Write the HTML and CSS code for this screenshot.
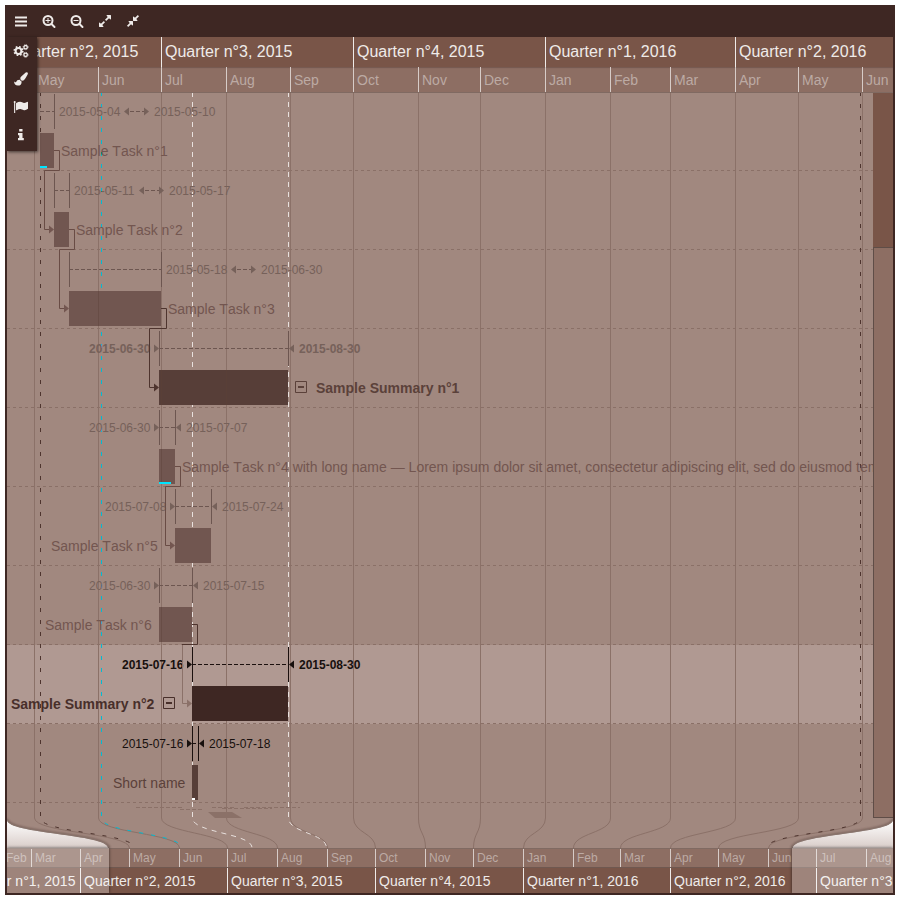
FILE: styles.css
```css
* { box-sizing: border-box; }
body {
  margin: 0;
  padding: 5px;
  background: #fff;
  font-family: "Liberation Sans", Arial, sans-serif;
}
.app {
  position: relative;
  display: flex;
  flex-direction: column;
  width: 890px;
  height: 890px;
  overflow: hidden;
  border: 2px solid #3e2723;
  background: #a1887f;
}
.toolbar { display: flex; flex: 0 0 30px; background: #3e2723; }
.tool {
  display: flex;
  align-items: center;
  justify-content: center;
  width: 28px;
  height: 28px;
}
.tool svg { width: 14px; height: 14px; overflow: visible; fill: #efebe9; }
.side-menu {
  position: absolute;
  top: 30px;
  left: 0;
  z-index: 2;
  width: 30px;
  height: 114px;
  background: #3e2723;
  box-shadow: 1px 1px 3px rgba(0, 0, 0, .6);
}

.scale { display: flex; overflow: hidden; white-space: nowrap; }
.scale span { flex: none; overflow: hidden; padding-left: 3px; border-left: 1px solid; }
.scale span:first-child { padding: 0; border: 0; }
.quarters { background: #795548; color: #efebe9; }
.months { background: #8d6e63; color: #bcaaa4; }
.months span { border-color: #d7ccc8; }
.main-quarters { flex: 0 0 30px; font-size: 16px; line-height: 29px; }
.main-quarters span:first-child { text-indent: 4px; }
.main-months {
  flex: 0 0 26px;
  border-bottom: 1px solid #806a62;
  font-size: 14px;
  line-height: 27px;
  box-shadow: inset 0 1px 1px rgba(62, 39, 35, .3);
}
.mini-months {
  flex: 0 0 20px;
  border-top: 1px solid #806a62;
  border-bottom: 1px solid #6f5850;
  font-size: 12px;
  line-height: 18px;
}
.mini-months span:first-child { text-indent: -1px; }
.mini-quarters { flex: 1; font-size: 14px; line-height: 27px; }
.mini-quarters span:first-child { text-indent: -43px; }
.overview { position: relative; display: flex; flex-direction: column; height: 45px; }
.veil { position: absolute; inset: 0; display: flex; justify-content: space-between; }
.veil div { width: 102px; background: rgba(255, 255, 255, .28); box-shadow: 0 0 3px rgba(0, 0, 0, .6); }
.veil div:last-child { width: 101px; }

.chart { display: block; flex: 0 0 755px; width: 886px; }
.chart path { fill: none; }
.hover-row { fill: #b09992; }
.grid { stroke: #8b7168; }
.bar-grid { stroke: #5d4037; opacity: .4; }
.rows { stroke: #8a7067; stroke-dasharray: 3 3; }
.task { fill: #715650; }
.dim { fill: #573e38; }
.full { fill: #3e2723; }
.progress { fill: #00e5ff; }
.started { fill: #fff; }
.marker { stroke: #4e342e; stroke-dasharray: 4 8; }
.marker.cyan { stroke: #00bcd4; }
.marker.light { stroke: #e8e0dd; stroke-dasharray: 5 5; }
.span { fill: #76615a; stroke: #6d5650; font-size: 12px; }
.span.now { fill: #17100e; stroke: #1b100e; }
.span text { stroke: none; }
.dash { stroke-dasharray: 4 2; }
.link { fill: #735650; stroke: #694c45; }
.link.dark { fill: #4e342e; stroke: #4e342e; }
.link.pale { fill: #8b7169; stroke: #8b7169; }
.chart .head { fill: inherit; stroke: none; }
.name { font-size: 14px; font-kerning: none; fill: #735650; }
.name.dim { fill: #5b413a; }
.name.full { fill: #482f2a; }
.bold { font-weight: bold; }
.toggle { stroke: #482f2a; fill: none; }
.toggle.dim { stroke: #5b413a; }
.minus { stroke-width: 2; }
.folded { stroke: #8b7168; }
.chart .fold-bar { fill: #8b7168; stroke: none; }
.thumb { fill: #795548; }
.track { fill: #8d6e63; stroke: #5f4d47; }
.chart .paper { fill: url(#paper); }
.shade { stroke: #3e2723; stroke-width: 2; opacity: .45; filter: url(#soft); }
.edge { stroke: #8a7972; opacity: .7; }
```

FILE: index.html
```html
<!DOCTYPE html>
<html lang="en">
<head>
<meta charset="utf-8">
<title>Gantt chart</title>
<link rel="stylesheet" href="styles.css">
</head>
<body>
<div class="app">
  <nav class="toolbar">
    <div class="tool"><svg viewBox="0 0 14 14"><path d="M1 2.500h12v2H1zM1 6.500h12v2H1zM1 10.500h12v2H1z"/></svg></div>
    <div class="tool"><svg viewBox="0 0 14 14"><g fill="none" stroke="#efebe9" stroke-width="2"><circle cx="6" cy="6.500" r="4.500"/><path d="M9.500 10l3 3" stroke-linecap="round"/><path d="M3.500 6.500h5M6 4v5" stroke-width="1"/></g></svg></div>
    <div class="tool"><svg viewBox="0 0 14 14"><g fill="none" stroke="#efebe9" stroke-width="2"><circle cx="6" cy="6.500" r="4.500"/><path d="M9.500 10l3 3" stroke-linecap="round"/><path d="M3.500 6.500h5" stroke-width="1"/></g></svg></div>
    <div class="tool"><svg viewBox="0 0 1792 1792"><path d="M883 1056q0 13-10 23l-332 332 144 144q19 19 19 45t-19 45-45 19H192q-26 0-45-19t-19-45v-448q0-26 19-45t45-19 45 19l144 144 332-332q10-10 23-10t23 10l114 114q10 10 10 23zm781-864v448q0 26-19 45t-45 19-45-19l-144-144-332 332q-10 10-23 10t-23-10L919 759q-10-10-10-23t10-23l332-332-144-144q-19-19-19-45t19-45 45-19h448q26 0 45 19t19 45z"/></svg></div>
    <div class="tool"><svg viewBox="0 0 1792 1792"><path d="M896 960v448q0 26-19 45t-45 19-45-19l-144-144-332 332q-10 10-23 10t-23-10l-114-114q-10-10-10-23t10-23l332-332-144-144q-19-19-19-45t19-45 45-19h448q26 0 45 19t19 45zm755-672q0 13-10 23l-332 332 144 144q19 19 19 45t-19 45-45 19H960q-26 0-45-19t-19-45V384q0-26 19-45t45-19 45 19l144 144 332-332q10-10 23-10t23 10l114 114q10 10 10 23z"/></svg></div>
  </nav>
  <aside class="side-menu">
    <div class="tool"><svg viewBox="0 0 14 14"><g fill="none" stroke="#efebe9"><circle cx="4.500" cy="7" r="2.900" stroke-width="2"/><circle cx="4.500" cy="7" r="4.300" stroke-width="1.600" stroke-dasharray="1.690"/><circle cx="11.600" cy="3.200" r="1.700" stroke-width="1.300"/><circle cx="11.600" cy="3.200" r="2.500" stroke-width=".8" stroke-dasharray="1"/><circle cx="11.600" cy="10.800" r="1.700" stroke-width="1.300"/><circle cx="11.600" cy="10.800" r="2.500" stroke-width=".8" stroke-dasharray="1"/></g></svg></div>
    <div class="tool"><svg viewBox="0 0 14 14"><path d="M12.700.2q1.200.1 1.200 1.300 0 .45-.3 1.050-2.500 4.600-3.500 5.500-.7.650-1.600.65-2.200-.1-2.200-2.300 0-.95.700-1.600L11.700.6q.45-.4 1-.4zM5.700 7.800q.6 1.300 1.900 1.600v.5q0 3.500-3.700 3.700Q.2 13.500.1 9.450q1 .8 1.450.8.4 0 .55-.35.700-2.200 3.600-2.100z"/></svg></div>
    <div class="tool"><svg viewBox="0 0 14 14"><path d="M1.700 1.900q0 .7-.5 1v10H.1v-10q-.5-.4-.4-1 0-1 1-1t1 1zM14 2.500v6.300q-1.900 1.400-3.300 1.400-.75 0-1.350-.25L8 9.400Q7.100 9 6.200 9q-1.500 0-3.500 1.150-.7.300-.7-.35V3.500q0-.3.300-.5 2-1.200 3.700-1.200 1.200 0 2.700.8.600.35 1.300.35 1.100 0 3-1 1-.4 1 .55z"/></svg></div>
    <div class="tool"><svg viewBox="0 0 14 14"><path d="M5.200 1h3.300v2.500H5.200zM4 5h4.500v5h1.300v2.200H4V10h1.200V7.200H4z"/></svg></div>
  </aside>
  <div class="scale quarters main-quarters"></div>
  <div class="scale months main-months"></div>
  <svg class="chart" viewBox="7 93 886 755"></svg>
  <footer class="overview">
    <div class="scale months mini-months"></div>
    <div class="scale quarters mini-quarters"></div>
    <div class="veil"><div></div><div></div></div>
  </footer>
</div>
<script src="chart.js"></script>
</body>
</html>
```

FILE: chart.js
```js
const MONTHS = 'Jan Feb Mar Apr May Jun Jul Aug Sep Oct Nov Dec'.split(' ');
const main = [34, 98, 161, 226, 290, 353, 418, 480, 545, 610, 670, 735, 798, 862];
const mini = [31, 80, 129, 179, 227, 277, 327, 375, 425, 473, 523, 573, 620, 670, 718, 768, 816, 866];

function scale(selector, edges, labels) {
  const all = [7, ...edges, 893];
  document.querySelector(selector).innerHTML = labels
    .map((l, i) => `<span style="width:${all[i + 1] - all[i]}px">${l}</span>`).join('');
}
const quarters = (from, n) => Array.from({ length: n }, (_, i) =>
  `Quarter n°${(from + i) % 4 + 1}, ${2015 + Math.floor((from + i) / 4)}`);
scale('.main-quarters', [161, 353, 545, 735], quarters(1, 5));
scale('.main-months', main, ['', ...main.map((_, i) => MONTHS[(i + 4) % 12])]);
scale('.mini-months', mini, ['Feb', ...mini.map((_, i) => MONTHS[(i + 2) % 12])]);
scale('.mini-quarters', [80, 227, 375, 523, 670, 816], quarters(0, 7));

const path = (d, c = '') => `<path class="${c}" d="${d}"/>`;
const box = (x, y, w, h, c) => `<rect class="${c}" x="${x}" y="${y}" width="${w}" height="${h}"/>`;
const text = (x, y, t, c = '') => `<text class="${c}" x="${x}" y="${y}">${t}</text>`;
const group = (c, s) => `<g class="${c}">${s}</g>`;
const right = (x, y) => path(`M${x - 5} ${y - 4}l5 4-5 4z`, 'head');
const left = (x, y) => path(`M${x + 5} ${y - 4}l-5 4 5 4z`, 'head');
// Vertical line that bends towards its place on the overview scale.
const bend = (x, to, top = 93) => `M${x} ${top}V818C${x} 833 ${to} 833 ${to} 848`;

// start x, end x, start date, end date, name, name x, bar style, dates layout, progress
const tasks = [
  [40, 54, '05-04', '05-10', 'Sample Task n°1', 61, 'task', 'after', 7],
  [54, 69, '05-11', '05-17', 'Sample Task n°2', 76, 'task', 'after'],
  [69, 161, '05-18', '06-30', 'Sample Task n°3', 168, 'task', 'after'],
  [159, 288, '06-30', '08-30', 'Sample Summary n°1', 316, 'dim', 'bold'],
  [159, 175, '06-30', '07-07', 'Sample Task n°4 with long name — Lorem ipsum dolor sit amet, consectetur adipiscing elit, sed do eiusmod tempor', 182, 'task', '', 12],
  [175, 211, '07-08', '07-24', 'Sample Task n°5', 51, 'task', ''],
  [159, 192, '06-30', '07-15', 'Sample Task n°6', 45, 'task', ''],
  [192, 288, '07-16', '08-30', 'Sample Summary n°2', 11, 'full', 'bold now'],
  [192, 198, '07-16', '07-18', 'Short name', 113, 'dim', 'now']
];

let bars = '', spans = '', names = '', rows = '';
tasks.forEach(([a, b, from, to, name, nx, style, mode, done], i) => {
  const y = 79 * i, my = y + 111.5;
  rows += `M7 ${y + 170.5}H873`;
  bars += box(a, y + 133, b - a, 35, style);
  if (style !== 'full') {
    bars += path(main.filter(x => x > a && x < b).map(x => `M${x + .5} ${y + 133}v35`).join(''), 'bar-grid');
  }
  if (done) bars += box(a, y + 166, done, 2, 'progress');
  const after = mode === 'after';
  const lines = path(`${i ? `M${a + .5} ${y + 94}v35` : ''}M${b + .5} ${y + 94}v35`) + path(`M${a} ${my}H${b}`, 'dash');
  spans += group('span ' + mode, lines + (after
    ? text(b + 5, y + 116, '2015-' + from) + left(b + 70, my) + path(`M${b + 76} ${my}h4m2 0h4m2 0h3`) + right(b + 95, my) + text(b + 100, y + 116, '2015-' + to)
    : text(a - 70, y + 116, '2015-' + from) + right(a, my) + left(b + 1, my) + text(b + 11, y + 116, '2015-' + to)));
  names += text(nx, y + 156, name, `name ${style === 'task' ? '' : style} ${mode.includes('bold') ? 'bold' : ''}`);
});

const link = (c, d, x, y) => group('link ' + c, path(d) + (x ? right(x, y) : ''));
const toggle = (x, y, c) => group('toggle ' + c, path(`M${x}.500 ${y}.500h11v11h-11z`) + path(`M${x + 3} ${y + 6}h6`, 'minus'));

document.querySelector('.chart').innerHTML = `<defs>
  <linearGradient id="paper" x1="0" y1="0" x2="0" y2="1"><stop offset="0" stop-color="#fff"/><stop offset="1" stop-color="#d9cdc9"/></linearGradient>
  <filter id="soft" x="-20%" y="-40%" width="140%" height="180%"><feGaussianBlur stdDeviation="1.3"/></filter>
  <clipPath id="area"><path d="M7 93h866v725H7z"/></clipPath></defs>`
  + box(7, 645, 866, 79, 'hover-row')
  + path(main.map((x, i) => bend(x + .5, mini[i + 2] + .5)).join(''), 'grid') + path(rows, 'rows')
  + path(bend(40.5, 134.5, 92) + bend(860.5, 766.5, 92), 'marker')
  + path(bend(101.5, 181.5, 92), 'marker cyan')
  + path(bend(192.5, 252, 92) + bend(288.5, 326.5, 92), 'marker light')
  + bars + box(192, 798, 3, 2, 'started') + spans
  + link('', 'M54 150.500H59.500V170.500H44.500V229.500H50', 54, 229.5)
  + link('', 'M69 229.500H74.500V249.500H59.500V308.500H65', 69, 308.5)
  + link('', 'M175 466.500H180.500V486.500H165.500V545.500H171', 175, 545.5)
  + link('dark', 'M161 308.500H166.500V328.500H149.500V387.500H155', 159, 387.5)
  + link('dark', 'M192 624.500H197.500V644.500H182')
  + link('pale', 'M182.500 645V703.500H188', 192, 703.5)
  + `<g clip-path="url(#area)">${names}</g>` + toggle(295, 381, 'dim') + toggle(163, 697, '')
  + group('folded', path('M136 807.500H182M212 807.500H236M244 807.500H300M180 809.500H204M222 808.500H272', 'dash') + path('M208 812h24l10 6h-27z', 'fold-bar'))
  + box(873, 93, 20, 154, 'thumb') + box(873.5, 247.5, 21, 570, 'track')
  + path('M7 819C7 834 109 833 109 848M893 819C893 834 792 833 792 848', 'shade')
  + path('M7 820C7 834 108 834 108 848H7zM893 820C893 834 793 834 793 848H893z', 'paper')
  + path('M7 819C7 834 109 833 109 848M893 819C893 834 792 833 792 848', 'edge');
```
